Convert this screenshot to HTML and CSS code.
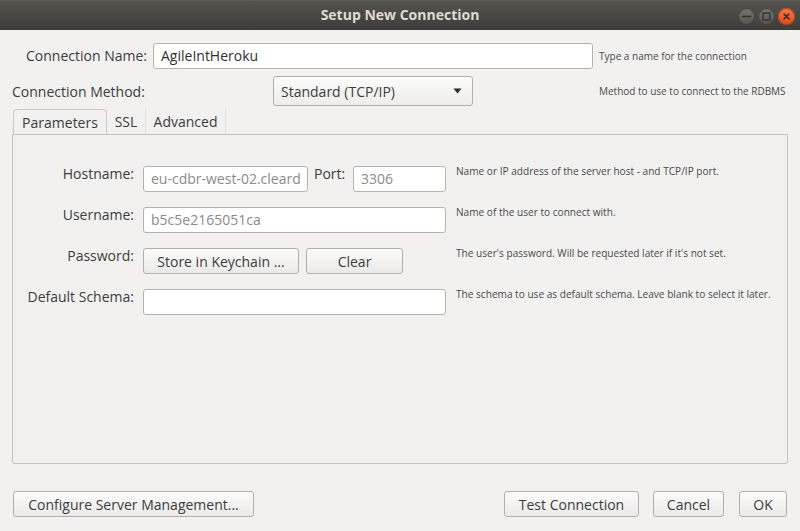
FILE: index.html
```html
<!DOCTYPE html>
<html lang="en">
<head>
<meta charset="utf-8">
<title>Setup New Connection</title>
<link rel="stylesheet" href="styles.css">
</head>
<body>
<div class="window">
  <header class="titlebar">
    <span class="spacer"></span>
    <span class="title">Setup New Connection</span>
    <div class="controls">
      <span class="wbtn wbtn-min"><svg width="17" height="17" viewBox="0 0 17 17"><path d="M4.5 8.5h8" stroke="#34332f" stroke-width="1.6" stroke-linecap="round"/></svg></span>
      <span class="wbtn wbtn-max"><svg width="17" height="17" viewBox="0 0 17 17"><rect x="5" y="5" width="7" height="7" fill="none" stroke="#34332f" stroke-width="1.4"/></svg></span>
      <span class="wbtn wbtn-close"><svg width="17" height="17" viewBox="0 0 17 17"><path d="M6 6l5 5M11 6l-5 5" stroke="#3a2a22" stroke-width="1.5" stroke-linecap="round"/></svg></span>
    </div>
  </header>

  <main class="content">
    <div class="row row-name">
      <label class="lbl lbl-name">Connection Name:</label>
      <div class="field field-name">AgileIntHeroku</div>
      <span class="help">Type a name for the connection</span>
    </div>

    <div class="row row-method">
      <label class="lbl lbl-method">Connection Method:</label>
      <div class="select">
        <span>Standard (TCP/IP)</span>
        <svg class="arrow" width="9" height="6" viewBox="0 0 9 6"><path d="M0.5 0.5h8l-4 5z" fill="#2b2b2b"/></svg>
      </div>
      <span class="help help-method">Method to use to connect to the RDBMS</span>
    </div>

    <nav class="tabs">
      <span class="tab tab-active">Parameters</span>
      <span class="tab tab-ssl">SSL</span>
      <span class="tab tab-adv">Advanced</span>
    </nav>

    <section class="panel">
      <div class="form">
        <label class="plbl">Hostname:</label>
        <div class="fieldset host">
          <div class="field field-host dim">eu-cdbr-west-02.cleard</div>
          <label class="plbl port-lbl">Port:</label>
          <div class="field field-port dim">3306</div>
        </div>
        <span class="phelp">Name or IP address of the server host - and TCP/IP port.</span>

        <label class="plbl">Username:</label>
        <div class="field field-wide dim">b5c5e2165051ca</div>
        <span class="phelp">Name of the user to connect with.</span>

        <label class="plbl">Password:</label>
        <div class="fieldset">
          <button class="btn btn-store">Store in Keychain ...</button>
          <button class="btn btn-clear">Clear</button>
        </div>
        <span class="phelp">The user's password. Will be requested later if it's not set.</span>

        <label class="plbl">Default Schema:</label>
        <div class="field field-wide"></div>
        <span class="phelp">The schema to use as default schema. Leave blank to select it later.</span>
      </div>
    </section>

    <footer class="actions">
      <button class="btn btn-config">Configure Server Management...</button>
      <span class="grow"></span>
      <button class="btn btn-test">Test Connection</button>
      <button class="btn btn-cancel">Cancel</button>
      <button class="btn btn-ok">OK</button>
    </footer>
  </main>
</div>
</body>
</html>
```

FILE: styles.css
```css
* { box-sizing: border-box; }

html, body {
  margin: 0;
  padding: 0;
  background: #f2f1f0;
}

body {
  font-family: "Open Sans", "Noto Sans", "DejaVu Sans", sans-serif;
  font-size: 14px;
  color: #3c3c3c;
}

.window {
  width: 800px;
  height: 531px;
  background: #f2f1f0;
  overflow: hidden;
}

/* ---------- title bar ---------- */
.titlebar {
  height: 30px;
  display: grid;
  grid-template-columns: 1fr auto 1fr;
  align-items: center;
  background: linear-gradient(#55534e, #3d3c38);
  border-top: 1px solid #5f5d58;
}

.title {
  font-weight: bold;
  font-size: 14px;
  color: #dfdbd2;
  line-height: 16px;
  margin-top: -1px;
}

.controls {
  justify-self: end;
  display: flex;
  gap: 3px;
  padding-right: 5px;
  margin-top: 2px;
}

.wbtn {
  width: 17px;
  height: 17px;
  border-radius: 50%;
  display: block;
  background: linear-gradient(#78766f, #55534e);
  box-shadow: inset 0 0 0 1px #3f3e3a;
}

.wbtn svg { display: block; }

.wbtn-close {
  background: linear-gradient(#f27a4d, #dd4b1c);
  box-shadow: inset 0 0 0 1px #b8431c;
}

/* ---------- top rows ---------- */
.content {
  padding: 13px 12px 0 12px;
}

.row {
  display: flex;
  align-items: center;
}

.row-name { height: 26px; }

.lbl { line-height: 18px; }

.lbl-name {
  width: 135px;
  text-align: right;
  margin-right: 6px;
}

.lbl-method {
  width: 261px;
  margin-top: 1px;
}

.field {
  height: 26px;
  background: #ffffff;
  border: 1px solid #b6b3ae;
  border-radius: 3px;
  padding: 0 7px;
  line-height: 24px;
  color: #2f2f2f;
  white-space: nowrap;
  overflow: hidden;
}

.field-name {
  width: 440px;
  padding-left: 7px;
}

.help {
  font-size: 10px;
  color: #4a4a4a;
  margin-left: 6px;
  line-height: 12px;
}

.row-method {
  height: 30px;
  margin-top: 7px;
}

.select {
  width: 200px;
  height: 30px;
  display: flex;
  align-items: center;
  justify-content: space-between;
  padding: 0 10px 0 7px;
  border: 1px solid #b3b0aa;
  border-radius: 3px;
  background: linear-gradient(#fbfbfa, #eeedec);
  color: #3c3c3c;
}

.select .arrow { display: block; }

.help-method { margin-left: 126px; }

/* ---------- tabs ---------- */
.tabs {
  display: flex;
  height: 25px;
  margin-top: 3px;
  padding-left: 1px;
}

.tab {
  display: flex;
  align-items: center;
  justify-content: center;
  height: 25px;
  color: #3c3c3c;
}

.tab-active {
  width: 94px;
  border: 1px solid #cbc8c3;
  border-bottom: none;
  border-radius: 4px 4px 0 0;
  background: #f2f1f0;
}

.tab-ssl {
  width: 39px;
  border-right: 1px solid #e0dedb;
}

.tab-adv {
  width: 80px;
  border-right: 1px solid #e0dedb;
}

/* ---------- panel ---------- */
.panel {
  height: 330px;
  border: 1px solid #c6c3be;
  border-radius: 0 0 2px 2px;
  background: #f2f1f0;
  padding-top: 31px;
}

.form {
  display: grid;
  grid-template-columns: 121px 303px auto;
  column-gap: 9px;
  row-gap: 15px;
  grid-auto-rows: 26px;
}

.plbl {
  text-align: right;
  align-self: start;
  line-height: 16px;
}

.fieldset {
  display: flex;
  align-items: start;
}

.field-host {
  width: 165px;
  padding: 0 2px 0 7px;
}

.port-lbl {
  width: 45px;
  text-align: left;
  padding-left: 6px;
}

.field-port { width: 93px; }

.field-wide { width: 303px; }

.dim { color: #8a8a88; }

.phelp {
  font-size: 10.1px;
  color: #4a4a4a;
  line-height: 12px;
  align-self: start;
  margin-left: 1px;
  margin-top: -1px;
  white-space: nowrap;
}

/* ---------- buttons ---------- */
.btn {
  font-family: inherit;
  font-size: 14px;
  color: #3c3c3c;
  height: 26px;
  padding: 2px 0 0 0;
  border: 1px solid #b3b0aa;
  border-radius: 3px;
  background: linear-gradient(#fbfbfa, #ebeae9);
  line-height: 22px;
}

.btn-store { width: 156px; }
.btn-clear { width: 97px; margin-left: 7px; }

.actions {
  display: flex;
  align-items: center;
  margin-top: 27px;
  padding-left: 1px;
}

.grow { flex: 1; }

.btn-config { width: 241px; }
.btn-test { width: 135px; }
.btn-cancel { width: 71px; margin-left: 14px; }
.btn-ok { width: 48px; margin-left: 15px; margin-right: 1px; }
```
